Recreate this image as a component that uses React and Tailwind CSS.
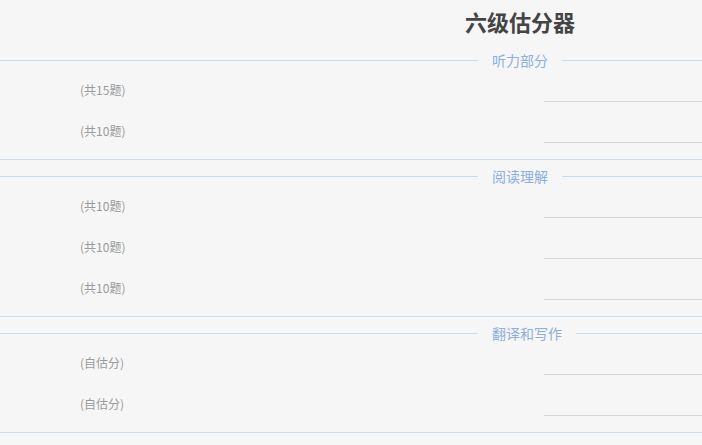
const SECTIONS = [
  {
    title: '听力部分',
    rows: ['(共15题)', '(共10题)'],
  },
  {
    title: '阅读理解',
    rows: ['(共10题)', '(共10题)', '(共10题)'],
  },
  {
    title: '翻译和写作',
    rows: ['(自估分)', '(自估分)'],
  },
]

function Section({ title, rows }) {
  return (
    <div className="border-b border-[#cfdcea]">
      <div className="flex h-8 items-center">
        <div className="h-px w-[478px] bg-[#c8dbf0]" />
        <span className="px-[14px] text-[14px] leading-none text-[#8cb0de]">{title}</span>
        <div className="h-px flex-1 bg-[#c8dbf0]" />
      </div>
      {rows.map((label, i) => (
        <div key={i} className="flex h-[41px] items-start">
          <span className="mt-[7px] pl-[80px] text-[12px] leading-[14px] text-[#9a9a9a]">{label}</span>
          <div className="ml-auto h-[26px] w-[496px] border-b border-[#d6d6d6]" />
        </div>
      ))}
      <div className="h-px" />
    </div>
  )
}

export default function App() {
  return (
    <div
      className="h-[445px] w-[702px] overflow-hidden bg-[#f6f6f6]"
      style={{ fontFamily: '"Noto Sans CJK SC", "Noto Sans", sans-serif' }}
    >
      <div className="w-[1040px]">
        <h1 className="flex h-[44px] items-center justify-center pb-[2px] text-[22px] font-bold leading-none text-[#444]">
          六级估分器
        </h1>
        {SECTIONS.map((s) => (
          <Section key={s.title} title={s.title} rows={s.rows} />
        ))}
      </div>
    </div>
  )
}
